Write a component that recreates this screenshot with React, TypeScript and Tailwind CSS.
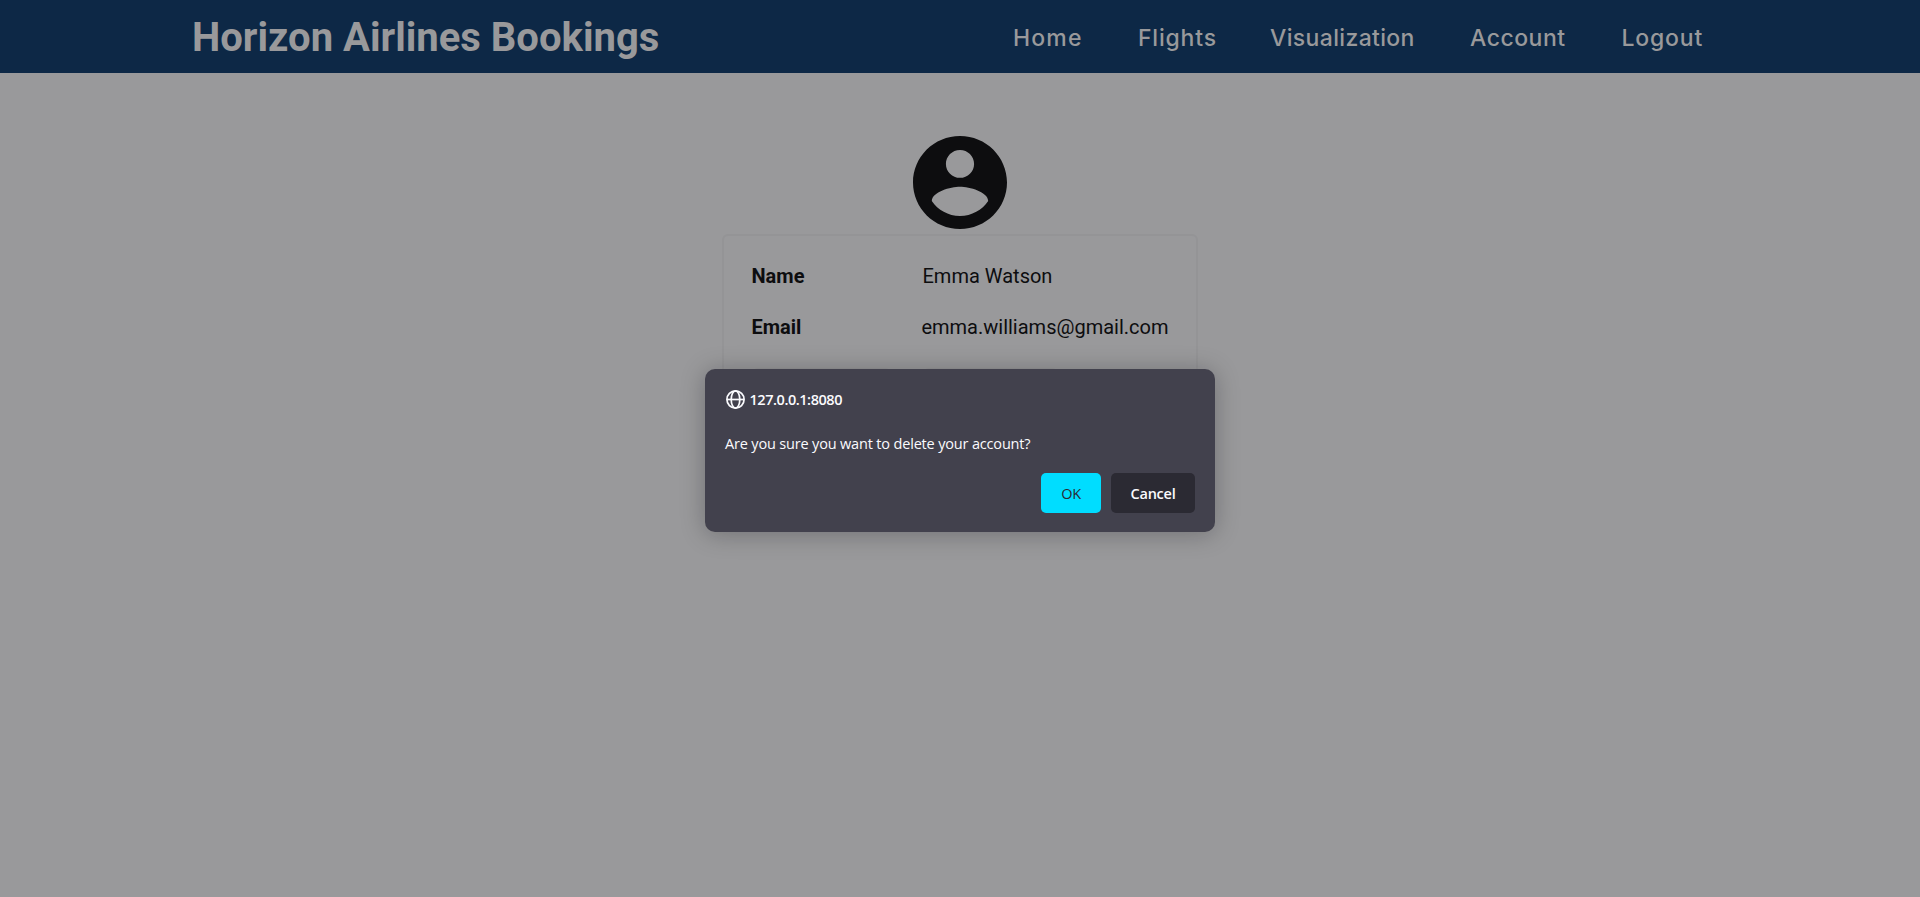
import React from "react";

const links = [
  { label: "Home", style: "w-[125px] tracking-[1.15px]" },
  { label: "Flights", style: "w-[132px] tracking-[0.8px]" },
  { label: "Visualization", style: "w-[200px] tracking-[0.35px]" },
  { label: "Account", style: "w-[151.5px] tracking-[0.5px]" },
  { label: "Logout", style: "w-[82.5px] tracking-[0.8px]" },
];

const rows = [
  { label: "Name", value: "Emma Watson" },
  { label: "Email", value: "emma.williams@gmail.com" },
];

function Header() {
  return (
    <header className="flex h-[73px] items-center justify-between bg-[#0d2846] pr-[216px] pl-[192px] text-[#99999b]">
      <h1 className="pt-[2px] text-[40px] leading-[47px] font-bold whitespace-nowrap">Horizon Airlines Bookings</h1>
      <nav className="flex pt-[3px] font-['Inter',sans-serif] text-[23px] leading-[30px] font-[450]">
        {links.map((link) => (
          <a key={link.label} className={`whitespace-nowrap ${link.style}`}>
            {link.label}
          </a>
        ))}
      </nav>
    </header>
  );
}

function AccountCard() {
  return (
    <main className="flex flex-col items-center pt-[63px] text-[#0d0d0f]">
      <svg className="h-[93px] w-[94px]" viewBox="2 2 20 20" preserveAspectRatio="none" fill="currentColor">
        <path d="M12 2C6.48 2 2 6.48 2 12s4.48 10 10 10 10-4.48 10-10S17.52 2 12 2zm0 3c1.66 0 3 1.34 3 3s-1.34 3-3 3-3-1.34-3-3 1.34-3 3-3zm0 14.2c-2.5 0-4.71-1.28-6-3.22.03-1.99 4-3.08 6-3.08 1.99 0 5.97 1.09 6 3.08-1.29 1.94-3.5 3.22-6 3.22z" />
      </svg>
      <section className="mt-[5px] w-[476px] rounded-md border-2 border-[#949496] px-[27.5px] pt-[14px] pb-7 text-xl">
        {rows.map((row) => (
          <div key={row.label} className="flex h-[51px] items-center">
            <span className="w-[171px] font-bold">{row.label}</span>
            <span className="whitespace-nowrap">{row.value}</span>
          </div>
        ))}
        <div className="mt-4 flex gap-8">
          <div className="h-10 w-[139px] rounded-md border-2 border-[#949496]" />
          <div className="h-10 w-[135px] rounded-md border-2 border-[#949496]" />
        </div>
      </section>
    </main>
  );
}

function ConfirmDialog() {
  return (
    <div
      role="dialog"
      className="absolute top-[369px] left-[705px] flex h-[163px] w-[510px] flex-col rounded-[10px] bg-[#42414d] px-5 pt-5 font-['Open_Sans',sans-serif] text-[14.5px] text-[#fbfbfe] shadow-[0_2px_24px_rgba(12,12,13,0.28)]"
    >
      <div className="flex h-5 items-center">
        <svg className="ml-[1px] size-[19px]" viewBox="0 0 19 19" fill="none" stroke="currentColor" strokeWidth="1.7">
          <circle cx="9.5" cy="9.5" r="8.6" />
          <ellipse cx="9.5" cy="9.5" rx="4.3" ry="8.6" />
          <path d="M1 9.5h17" />
        </svg>
        <span className="mt-[2px] ml-[4.5px] font-semibold tracking-[-0.45px]">127.0.0.1:8080</span>
      </div>
      <p className="mt-[25px] leading-5 tracking-[-0.17px] whitespace-nowrap">
        Are you sure you want to delete your account?
      </p>
      <div className="mt-[19px] flex justify-end gap-[10px] font-semibold tracking-[-0.25px]">
        <button className="h-10 w-[60px] rounded-[5px] bg-[#00ddff] pt-[2px] font-medium text-[#2b2a33]">OK</button>
        <button className="h-10 w-[84px] rounded-[5px] bg-[#2b2a33] pt-[2px]">Cancel</button>
      </div>
    </div>
  );
}

export default function App() {
  return (
    <div className="relative h-[897px] w-full overflow-hidden bg-[#99999b] font-['Roboto',sans-serif]">
      <Header />
      <AccountCard />
      <ConfirmDialog />
    </div>
  );
}
